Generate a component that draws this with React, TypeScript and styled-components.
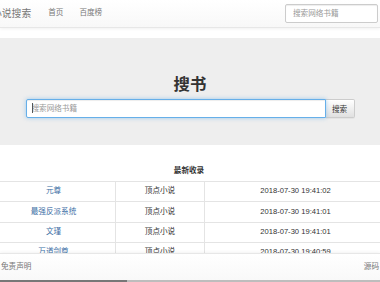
import React from "react";
import styled, { createGlobalStyle } from "styled-components";

const GlobalStyle = createGlobalStyle`
  html, body {
    margin: 0;
    padding: 0;
    overflow: hidden;
    background: #fff;
  }
  body {
    font-family: "Liberation Sans", "Noto Sans CJK SC", sans-serif;
    font-size: 7.6px;
    line-height: 1.43;
    color: #333;
  }
  * { box-sizing: border-box; }
`;

const Page = styled.div`
  width: 380px;
  height: 282px;
  position: relative;
  overflow: hidden;
`;

const Navbar = styled.nav`
  height: 28px;
  display: flex;
  align-items: center;
  background: linear-gradient(to bottom, #fff 0%, #f8f8f8 100%);
  border-bottom: 1px solid #e7e7e7;
  box-shadow: 0 1px 3px rgba(0, 0, 0, 0.06);
  padding: 0 2px 0 0;
`;

const Brand = styled.span`
  font-size: 9.8px;
  color: #777;
  margin-left: -8px;
  margin-right: 9px;
  white-space: nowrap;
`;

const NavLink = styled.a`
  color: #777;
  padding: 0 8px;
  text-decoration: none;
  white-space: nowrap;
`;

const NavSearch = styled.input`
  margin-left: auto;
  width: 93px;
  height: 19px;
  border: 1px solid #ccc;
  border-radius: 2px;
  padding: 0 7px;
  font-family: inherit;
  font-size: 7.6px;
  background: #fff;
  box-shadow: inset 0 1px 1px rgba(0, 0, 0, 0.075);
  outline: none;
  &::placeholder { color: #999; }
`;

const Jumbotron = styled.section`
  margin-top: 10px;
  background: #eee;
  height: 107px;
  padding-top: 36px;
  display: flex;
  flex-direction: column;
  align-items: center;
`;

const Title = styled.h2`
  margin: 0;
  font-size: 16.4px;
  line-height: 20px;
  font-weight: bold;
  color: #333;
`;

const InputGroup = styled.div`
  display: flex;
  width: 329px;
  margin-top: 5px;
`;

const BigInput = styled.input`
  flex: 1;
  height: 19px;
  border: 1px solid #66afe9;
  border-radius: 2px 0 0 2px;
  padding: 0 5px;
  font-family: inherit;
  font-size: 7.6px;
  background: #fff;
  outline: none;
  box-shadow: inset 0 1px 1px rgba(0, 0, 0, 0.075), 0 0 4px rgba(102, 175, 233, 0.6);
  &::placeholder { color: #999; }
`;

const Caret = styled.span`
  position: absolute;
  left: 6px;
  top: 4px;
  width: 1px;
  height: 10px;
  background: #555;
`;

const InputWrap = styled.div`
  position: relative;
  flex: 1;
  display: flex;
`;

const SearchButton = styled.button`
  width: 29px;
  height: 19px;
  border: 1px solid #ccc;
  border-left: none;
  border-radius: 0 2px 2px 0;
  background: linear-gradient(to bottom, #fff 0%, #e0e0e0 100%);
  font-family: inherit;
  font-size: 7.6px;
  color: #333;
  padding: 0;
  box-shadow: 0 1px 0 rgba(0, 0, 0, 0.04);
`;

const Table = styled.table`
  width: 395px;
  margin-left: -9px;
  margin-top: 15px;
  border-collapse: collapse;
  table-layout: fixed;
`;

const Caption = styled.caption`
  font-weight: bold;
  color: #333;
  height: 21px;
  line-height: 21px;
  text-align: center;
`;

const Cell = styled.td<{ $w: number }>`
  width: ${(p) => p.$w}px;
  height: 20.3px;
  padding: 0 4px;
  border: 1px solid #e4e4e4;
  text-align: center;
  vertical-align: middle;
  white-space: nowrap;
`;

const BookLink = styled.a`
  color: #3b6ea5;
  text-decoration: none;
`;

const Footer = styled.footer`
  position: absolute;
  left: 0;
  right: 0;
  bottom: 0;
  height: 29px;
  display: flex;
  align-items: center;
  justify-content: space-between;
  padding: 0 1px 2px 1px;
  background: linear-gradient(to bottom, #fff 0%, #f8f8f8 100%);
  border-top: 1px solid #e7e7e7;
  box-shadow: 0 -1px 3px rgba(0, 0, 0, 0.05);
  color: #777;
`;

const ScrollTrack = styled.div`
  position: absolute;
  left: 0;
  right: 0;
  bottom: 0;
  height: 2px;
  background: #bdbdbd;
`;

const ScrollThumb = styled.div`
  width: 127px;
  height: 100%;
  background: #777;
`;

const rows = [
  { name: "元尊", site: "顶点小说", time: "2018-07-30 19:41:02" },
  { name: "最强反派系统", site: "顶点小说", time: "2018-07-30 19:41:01" },
  { name: "文瑾", site: "顶点小说", time: "2018-07-30 19:41:01" },
  { name: "万道剑尊", site: "顶点小说", time: "2018-07-30 19:40:59" },
];

export default function App() {
  return (
    <Page>
      <GlobalStyle />
      <Navbar>
        <Brand>小说搜索</Brand>
        <NavLink>首页</NavLink>
        <NavLink>百度榜</NavLink>
        <NavSearch placeholder="搜索网络书籍" />
      </Navbar>
      <Jumbotron>
        <Title>搜书</Title>
        <InputGroup>
          <InputWrap>
            <BigInput placeholder="搜索网络书籍" />
            <Caret />
          </InputWrap>
          <SearchButton>搜索</SearchButton>
        </InputGroup>
      </Jumbotron>
      <Table>
        <Caption>最新收录</Caption>
        <tbody>
          {rows.map((r) => (
            <tr key={r.name}>
              <Cell $w={124}>
                <BookLink>{r.name}</BookLink>
              </Cell>
              <Cell $w={89}>{r.site}</Cell>
              <Cell $w={182}>{r.time}</Cell>
            </tr>
          ))}
        </tbody>
      </Table>
      <Footer>
        <span>免责声明</span>
        <span>源码</span>
        <ScrollTrack>
          <ScrollThumb />
        </ScrollTrack>
      </Footer>
    </Page>
  );
}
